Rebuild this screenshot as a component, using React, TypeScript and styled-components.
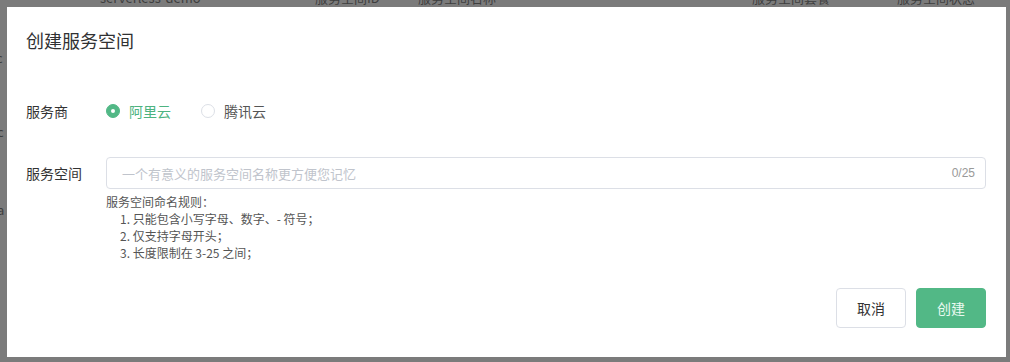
import React from "react";
import styled, { createGlobalStyle } from "styled-components";

const GlobalStyle = createGlobalStyle`
  html, body { margin: 0; padding: 0; }
  body {
    width: 1010px;
    height: 362px;
    overflow: hidden;
    background: #7b7b7b;
    font-family: "Noto Sans CJK SC", "Noto Sans", sans-serif;
  }
`;

const Page = styled.div`
  position: relative;
  width: 1010px;
  height: 362px;
  box-sizing: border-box;
  padding: 7px 4px 4px 7px;
`;

const Ghost = styled.span<{ $x: number; $y: number }>`
  position: absolute;
  left: ${(p) => p.$x}px;
  top: ${(p) => p.$y}px;
  font-size: 13px;
  line-height: 14px;
  color: #3e3e3e;
  white-space: nowrap;
`;

const Dialog = styled.div`
  position: relative;
  width: 999px;
  height: 350px;
  box-sizing: border-box;
  background: #fff;
  padding: 21px 20px 29px 19px;
  display: flex;
  flex-direction: column;
`;

const Title = styled.h2`
  margin: 0;
  font-size: 18px;
  line-height: 24px;
  font-weight: 400;
  color: #303133;
`;

const FormRow = styled.div<{ $mt: number }>`
  margin-top: ${(p) => p.$mt}px;
  display: flex;
  align-items: center;
  height: 32px;
`;

const Label = styled.div`
  width: 80px;
  flex: none;
  font-size: 14px;
  color: #333;
`;

const RadioGroup = styled.div`
  display: flex;
  align-items: center;
  gap: 30px;
`;

const RadioItem = styled.label<{ $checked?: boolean }>`
  display: flex;
  align-items: center;
  gap: 9px;
  font-size: 14px;
  color: ${(p) => (p.$checked ? "#4db380" : "#555")};
`;

const RadioDot = styled.span<{ $checked?: boolean }>`
  width: 14px;
  height: 14px;
  box-sizing: border-box;
  border-radius: 50%;
  border: 1px solid ${(p) => (p.$checked ? "#52b886" : "#dcdfe6")};
  background: ${(p) => (p.$checked ? "#52b886" : "#fff")};
  display: flex;
  align-items: center;
  justify-content: center;
  &::after {
    content: "";
    width: 4px;
    height: 4px;
    border-radius: 50%;
    background: #fff;
    display: ${(p) => (p.$checked ? "block" : "none")};
  }
`;

const InputBox = styled.div`
  flex: 1;
  height: 32px;
  box-sizing: border-box;
  border: 1px solid #dcdfe6;
  border-radius: 4px;
  display: flex;
  align-items: center;
  padding: 0 10px 0 15px;
`;

const Placeholder = styled.span`
  flex: 1;
  font-size: 13px;
  color: #c0c4cc;
`;

const Count = styled.span`
  font-size: 12px;
  color: #999;
  font-family: "Liberation Sans", "Noto Sans CJK SC", sans-serif;
`;

const Rules = styled.div`
  margin: 4px 0 0 80px;
  font-size: 12px;
  line-height: 17px;
  color: #555;
`;

const RuleItem = styled.div`
  padding-left: 14px;
`;

const Footer = styled.div`
  margin-top: auto;
  display: flex;
  justify-content: flex-end;
  gap: 10px;
`;

const Button = styled.button<{ $primary?: boolean }>`
  width: 70px;
  height: 40px;
  border-radius: 4px;
  font-family: inherit;
  font-size: 14px;
  cursor: pointer;
  border: 1px solid ${(p) => (p.$primary ? "#52b886" : "#dcdfe6")};
  background: ${(p) => (p.$primary ? "#52b886" : "#fff")};
  color: ${(p) => (p.$primary ? "#eafaf1" : "#333")};
`;

export default function App() {
  return (
    <>
      <GlobalStyle />
      <Page>
        <Ghost $x={100} $y={-9}>serverless-demo</Ghost>
        <Ghost $x={315} $y={-9}>服务空间ID</Ghost>
        <Ghost $x={418} $y={-9}>服务空间名称</Ghost>
        <Ghost $x={752} $y={-9}>服务空间套餐</Ghost>
        <Ghost $x={897} $y={-9}>服务空间状态</Ghost>
        <Ghost $x={-4} $y={51}>c</Ghost>
        <Ghost $x={-3} $y={125}>c</Ghost>
        <Ghost $x={-3} $y={203}>a</Ghost>
        <Dialog>
          <Title>创建服务空间</Title>
          <FormRow $mt={43}>
            <Label>服务商</Label>
            <RadioGroup>
              <RadioItem $checked>
                <RadioDot $checked />
                阿里云
              </RadioItem>
              <RadioItem>
                <RadioDot />
                腾讯云
              </RadioItem>
            </RadioGroup>
          </FormRow>
          <FormRow $mt={30}>
            <Label>服务空间</Label>
            <InputBox>
              <Placeholder>一个有意义的服务空间名称更方便您记忆</Placeholder>
              <Count>0/25</Count>
            </InputBox>
          </FormRow>
          <Rules>
            <div>服务空间命名规则：</div>
            <RuleItem>1. 只能包含小写字母、数字、- 符号；</RuleItem>
            <RuleItem>2. 仅支持字母开头；</RuleItem>
            <RuleItem>3. 长度限制在 3-25 之间；</RuleItem>
          </Rules>
          <Footer>
            <Button>取消</Button>
            <Button $primary>创建</Button>
          </Footer>
        </Dialog>
      </Page>
    </>
  );
}
